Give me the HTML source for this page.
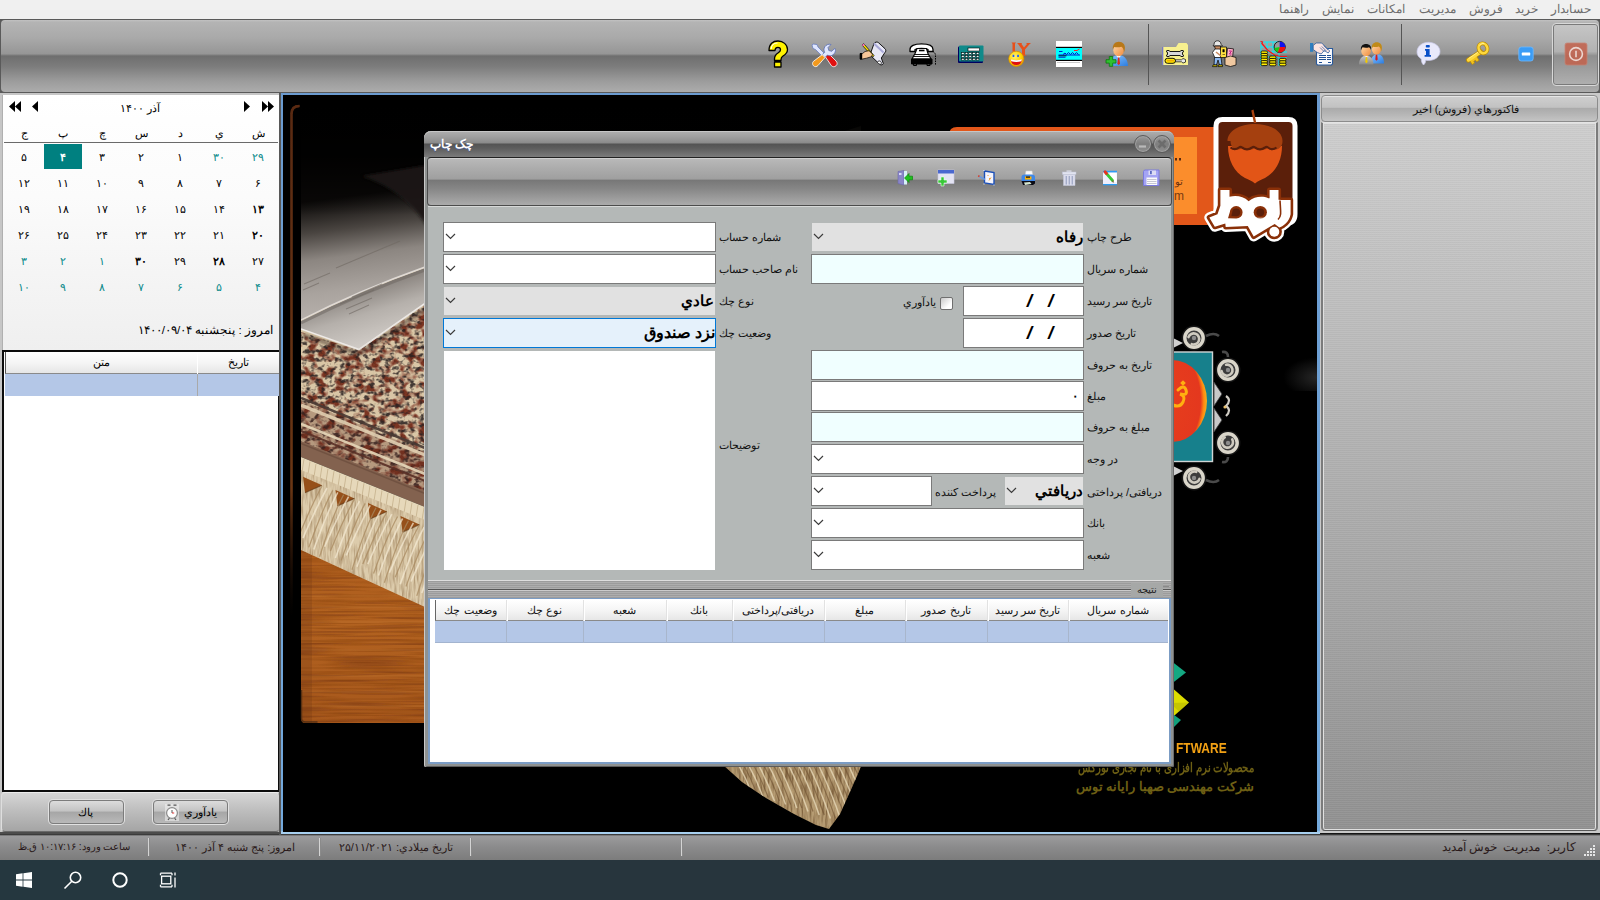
<!DOCTYPE html>
<html lang="fa"><head><meta charset="utf-8"><title>چک چاپ</title>
<style>
html,body{margin:0;padding:0}
body{width:1600px;height:900px;overflow:hidden;background:#f0f0f0;position:relative;font-family:"Liberation Sans",sans-serif;}
div{position:absolute;box-sizing:border-box}
svg{position:absolute;display:block}
.t{white-space:nowrap;direction:rtl;overflow:visible}
.tb{background:linear-gradient(#c2c2c2 0,#b4b4b4 3%,#a9a9a9 25%,#969696 47%,#6e6e6e 50%,#7d7d7d 65%,#9c9c9c 85%,#acacac 100%)}
.fld{border:1px solid #7a7a7a;background:#fff}
.az{background:#f0ffff}
.dis{background:#e1e1e1;border-color:#e1e1e1}
.hd{background:linear-gradient(#ffffff,#f4f4f4 55%,#e6e6e6)}
</style></head><body>

<div style="left:0px;top:0px;width:1600px;height:19px;background:#f0f0f0"></div>
<div class="t" style="left:1531px;top:0px;width:80px;height:18px;line-height:18px;font-size:12px;color:#6d6d6d;text-align:center;">حسابدار</div>
<div class="t" style="left:1486.75px;top:0px;width:80px;height:18px;line-height:18px;font-size:12px;color:#6d6d6d;text-align:center;">خرید</div>
<div class="t" style="left:1446px;top:0px;width:80px;height:18px;line-height:18px;font-size:12px;color:#6d6d6d;text-align:center;">فروش</div>
<div class="t" style="left:1397.75px;top:0px;width:80px;height:18px;line-height:18px;font-size:12px;color:#6d6d6d;text-align:center;">مدیریت</div>
<div class="t" style="left:1346.25px;top:0px;width:80px;height:18px;line-height:18px;font-size:12px;color:#6d6d6d;text-align:center;">امکانات</div>
<div class="t" style="left:1297.75px;top:0px;width:80px;height:18px;line-height:18px;font-size:12px;color:#6d6d6d;text-align:center;">نمایش</div>
<div class="t" style="left:1253.5px;top:0px;width:80px;height:18px;line-height:18px;font-size:12px;color:#6d6d6d;text-align:center;">راهنما</div>
<div style="left:0px;top:19px;width:1600px;height:74px;background:#5a5a5a"></div>
<div class="tb" style="left:1px;top:20px;width:1598px;height:72px;border-radius:4px"></div>
<div style="left:1148px;top:24px;width:1px;height:61px;background:#555"></div>
<div style="left:1401px;top:24px;width:1px;height:61px;background:#555"></div>
<div style="left:1552px;top:23px;width:47px;height:63px;border:1px solid #d8d8d8;border-radius:4px;box-shadow:inset 0 0 0 1px #7a7a7a;background:linear-gradient(#c6c6c6 0,#b2b2b2 45%,#9a9a9a 50%,#8f8f8f 52%,#b0b0b0 100%)"></div>
<svg style="left:0;top:19px" width="1600" height="74" viewBox="0 19 1600 74"><defs><radialGradient id="gsm" cx=".4" cy=".35" r=".7"><stop offset="0" stop-color="#fff27a"/><stop offset=".6" stop-color="#ffd400"/><stop offset="1" stop-color="#e89a00"/></radialGradient><linearGradient id="gskin" x1="0" y1="0" x2="1" y2="1"><stop offset="0" stop-color="#ffd9a8"/><stop offset="1" stop-color="#f08a3c"/></linearGradient><linearGradient id="gblue" x1="0" y1="0" x2="1" y2="1"><stop offset="0" stop-color="#8cc4ff"/><stop offset="1" stop-color="#2b7de0"/></linearGradient><linearGradient id="ggray" x1="0" y1="0" x2="0" y2="1"><stop offset="0" stop-color="#c4c4c4"/><stop offset="1" stop-color="#8a8a8a"/></linearGradient><linearGradient id="gkey" x1="0" y1="0" x2="1" y2="1"><stop offset="0" stop-color="#ffe76a"/><stop offset="1" stop-color="#d79a00"/></linearGradient></defs><g transform="translate(768,40)"><path d="M1 10.500C1 4 5 1 10 1s9.500 3.500 9.500 8.500c0 3.500-2 5-4.500 6.500-1.500 1-2 1.800-2 3.500v1H6.500v-1.500c0-3 1.300-4.600 3.500-6 1.500-1 2.500-1.700 2.500-3.300 0-1.500-1.100-2.400-2.600-2.400C8 7.300 7 8.500 7 10.500z M6.500 22h6.500v5H6.500z" fill="#fff200" stroke="#000" stroke-width="1.300" stroke-linejoin="round"/><path d="M3 9c.500-3.500 3-6 6.500-6" stroke="#fff" stroke-width="1.200" fill="none"/></g><g transform="translate(811,42)"><path d="M2 2l4 .500 1 2.500 9 9-2.500 2.500-9-9L2 6.500 1 3z" fill="#dfe6ff" stroke="#6a7fc0" stroke-width=".8"/><path d="M13.500 13.500l3-3 8.500 8.500c1.500 1.500 1.500 3.500 0 4.800-1.400 1.300-3.300 1.200-4.700-.2z" fill="#e01010" stroke="#fff" stroke-width=".8"/><path d="M24.500 8.500c-.300 2.500-1.800 4.400-4 5-1.500.400-2.800.200-4-.5L14 15.500l-2.800-2.800 2.500-2.500c-.700-1.300-.900-2.600-.5-4 .600-2.200 2.600-3.700 5-4L20 2.500l-3 3 .800 3 3 .8 3-3z" fill="#dfe6ff" stroke="#5a70b8" stroke-width=".8"/><path d="M11.200 12.700l2.800 2.800-7 8c-1.200 1.400-3.200 1.500-4.500.3-1.300-1.300-1.300-3.300 0-4.500z" fill="#f39a1e" stroke="#fff" stroke-width=".8"/></g><g transform="translate(860,41)"><path d="M14 2.500c1-1.500 3-2 4.500-.8l6.500 6c1.200 1.200 1 3-.2 4l-3.500 5.300 2 5.500c-.500 1.300-2 1.800-3.300 1L10 14z" fill="#e8e8f6" stroke="#000" stroke-width=".9"/><path d="M14 2.500l9.500 9" stroke="#a9a9d8" stroke-width="2"/><path d="M17.500 21.500c.200-1.300 1.600-1.900 2.800-1.300 1 .500 1.300 1.800.7 2.800" fill="#fff" stroke="#000" stroke-width=".8"/><path d="M2 4l1.800-1.300L14 14.500l-.500 1-1.200-.2z" fill="#ffe100" stroke="#000" stroke-width=".7"/><path d="M2 4l1.800-1.300 1 1.200-1.700 1.400z" fill="#ff6ad0"/><path d="M0 12.500h2.500l2.500-2 4-.800 3.500 3.500-1 2.500-5 1.500-4 .8H0z" fill="#f7c79a" stroke="#000" stroke-width=".7"/><rect x="0" y="12" width="2.200" height="6.500" fill="#000"/></g><g transform="translate(909,43)" stroke="#000" stroke-linejoin="round"><path d="M1 6.500C1 3 5 .800 12.500 .8S24 3 24 6.500V8.500h-5V6.500c-1.500-.800-4-1.200-6.500-1.200S7.500 5.700 6 6.500V8.500H1z" fill="#fff" stroke-width="1.300"/><path d="M8 5.500h9.500l1.500 5 3 5.500H3l3-5.500z" fill="#fff" stroke-width="1.200"/><path d="M10 7.500h5.500" stroke-width="1.600"/><path d="M5.500 11.500h14.500 M4.500 13.500h16.500" stroke-width=".9"/><path d="M2.500 16h20.500v5H2.500z" fill="#000" stroke-width="1"/><path d="M4.500 21v1.500h3V21 M18 21v1.500h3V21" fill="none" stroke-width="1"/><path d="M24 8.500c2 1 2.500 2.500 2.500 4.500v9" fill="none" stroke-width="1" stroke-dasharray="1.500 1"/></g><g transform="translate(958,45.500)"><rect x="0" y="1" width="25" height="16.500" rx="1" fill="#000060"/><rect x="1" y="0" width="24.500" height="16" rx="1" fill="#0f8a8a"/><rect x="10" y="2.500" width="11.500" height="3" fill="#fff" stroke="#000" stroke-width=".6"/><g fill="#fff" stroke="#000" stroke-width=".5"><rect x="3.5" y="7.2" width="2.600" height="1.600"/><rect x="3.5" y="10.1" width="2.600" height="1.600"/><rect x="3.5" y="13.0" width="2.600" height="1.600"/><rect x="7.2" y="7.2" width="2.600" height="1.600"/><rect x="7.2" y="10.1" width="2.600" height="1.600"/><rect x="7.2" y="13.0" width="2.600" height="1.600"/><rect x="10.9" y="7.2" width="2.600" height="1.600"/><rect x="10.9" y="10.1" width="2.600" height="1.600"/><rect x="10.9" y="13.0" width="2.600" height="1.600"/><rect x="14.600000000000001" y="7.2" width="2.600" height="1.600"/><rect x="14.600000000000001" y="10.1" width="2.600" height="1.600"/><rect x="14.600000000000001" y="13.0" width="2.600" height="1.600"/><rect x="18.3" y="7.2" width="2.600" height="1.600"/><rect x="18.3" y="10.1" width="2.600" height="1.600"/><rect x="18.3" y="13.0" width="2.600" height="1.600"/></g></g><g><path d="M1011.500 42.500h4.500l-1 1.200v8h-2.500v-8z M1017 43h5l-.500 1 2.500 3.500 3-3.500-1-1h5l-1.500 1.200-4.500 5.300v5.300l1.500 1h-6l1.500-1v-5.300l-4-5.500z" fill="#e8501a"/><circle cx="1016.300" cy="58.800" r="7.600" fill="url(#gsm)" stroke="#d98a00" stroke-width=".7"/><rect x="1012.600" y="54.800" width="1.700" height="2.200" fill="#1a5cff"/><rect x="1017.200" y="54.800" width="1.700" height="2.200" fill="#1a5cff"/><path d="M1010.500 59.500q5.800 1.800 11.600 0q-1 5.500-5.800 5.500t-5.800-5.500z" fill="#e01010"/><path d="M1010.700 59.300q5.600 1.800 11.200 0l-.5 2q-5.100 1.300-10.200 0z" fill="#fff"/></g><g><rect x="1056" y="41" width="26" height="26" fill="#fff"/><rect x="1056" y="47.500" width="26" height="13" fill="#00ffff"/><rect x="1056" y="46.800" width="26" height="1.200" fill="#000"/><rect x="1056" y="59.800" width="26" height="1.200" fill="#000"/><rect x="1057" y="62" width="23" height=".8" fill="#bcbcbc"/><path d="M1059 51.500h3.500 M1063 54.500l2-1.500 1.500 1.500 2-2 2 2 2-2 2 2 2-2 2 2 M1058.500 55h21.500 M1058.500 57.200h7" stroke="#0018d0" stroke-width="1" fill="none"/><path d="M1058.500 55.800h8" stroke="#000" stroke-width=".8"/><path d="M1074 50.500h3l2.500-1.500" stroke="#ff2020" stroke-width="1" fill="none"/></g><g><path d="M1109 66c0-5 3-9.500 6.500-10.500h6c4 1 6.500 5.500 6.500 10.500z" fill="url(#gblue)"/><path d="M1116 55.500l2.600 3 2.600-3z" fill="#fff"/><path d="M1118 57.500h1.300l.7 6-1.300 1.800-1.300-1.800z" fill="#e02818"/><ellipse cx="1118.600" cy="50.200" rx="5.300" ry="6" fill="url(#gskin)"/><path d="M1112.800 49.500c-.500-5 2.500-7.700 6-7.700 4 0 6.800 2.800 6 7.700-.200 1.500-.700 2.300-1 3 .200-3-1-5-2.500-5.800-2 .700-5.500.500-7 .3-.800.800-1.200 1.500-1.500 2.500z" fill="#b87818"/><path d="M1109.300 56.500h3.400v3.200h3.300v3.400h-3.300v3.200h-3.400v-3.200H1106v-3.400h3.300z" fill="#30c030" stroke="#0a7a0a" stroke-width=".8"/></g><g><path d="M1162 47h14l2.500-4h8l1.500 2v20h-26z" fill="#f7f08f"/><rect x="1162" y="47" width="1.300" height="18" fill="#7878c8"/><path d="M1166 51.500c1-1.500 3-1.500 4 0h10c1-1.500 3-1.500 4 0l-1.500.8v2.400l1.500.8c-1 1.500-3 1.500-4 0h-10c-1 1.500-3 1.500-4 0l1.500-.8v-2.400z" fill="#d8d8d8" stroke="#000" stroke-width=".9"/><rect x="1165" y="58.300" width="10.500" height="5" rx="2.500" fill="#ffe600" stroke="#000" stroke-width=".9"/><path d="M1175.500 59.800h6l1.500-1.300 2.500 1v2.600l-2.500 1-1.500-1.300h-6z" fill="#e8e8e8" stroke="#000" stroke-width=".7"/><path d="M1167 60.800h7" stroke="#f0a000" stroke-width="1.200"/></g><g stroke="#000" stroke-width=".7" stroke-linejoin="round"><path d="M1214 44.500c0-2.500 1.700-3.700 3.500-3.700s3.500 1.200 3.500 3.500l1.500 1.700h-9.500z" fill="#e8e8e8"/><path d="M1214.500 46h6v3.500h-5z" fill="#c88a60"/><path d="M1212.500 52.500l2.500-3.500h5l2 3.500-1 5.500h-6z" fill="#fff"/><path d="M1214.500 57.500h6.500l1 7.500h-2.500l-1.500-5-1.500 5h-2.500z" fill="#8cb8f0"/><path d="M1213 65h4v1.600h-4.500z M1218.500 65h4v1.600H1218z" fill="#ffe600"/><rect x="1220.500" y="47" width="6" height="10.500" fill="#ffe040"/><rect x="1227" y="48.500" width="6" height="10" fill="#ffb0c8" transform="rotate(6 1230 53)"/><path d="M1225 57.500l5.500-1.500 5.500 1.500v7.500l-5.500 1.500-5.500-1.500z" fill="#f0c8a0"/><path d="M1216 52l5 4" stroke="#c88a60" stroke-width="1.600" fill="none"/><path d="M1222.800 49.500h1.500v2.500h-1.500z M1222.500 54.500h2.500" fill="#000" stroke-width=".5"/><path d="M1229 51h2.500l-2 3h2" stroke="#c02080" stroke-width="1" fill="none"/></g><g><path d="M1261 42v24 M1267 42v10 M1273 42v14 M1279 52v14 M1261 42h19 M1261 47h14 M1261 52h26 M1267 57h20" stroke="#00f0ff" stroke-width="1" fill="none"/><path d="M1260.500 41.500l2 .500-.500 1.500 M1261.500 43l6 7 7 5 6 1.500 6.500 0" stroke="#ff1010" stroke-width="1.200" fill="none"/><circle cx="1279.700" cy="47" r="5.600" fill="#9a9a9a" stroke="#000" stroke-width=".8"/><path d="M1279.700 47V41.400a5.600 5.600 0 0 1 5.600 5.600z" fill="#1010f0"/><path d="M1279.700 47h5.600a5.600 5.600 0 0 1-7.600 5.200z" fill="#f01010"/><path d="M1279.700 47l-2 5.200a5.600 5.600 0 0 1-3.500-4.200z" fill="#10d010"/><rect x="1261" y="51.0" width="6.5" height="2.600" rx="1.300" fill="#ffee00" stroke="#000" stroke-width=".8"/><rect x="1261" y="53.4" width="6.5" height="2.600" rx="1.300" fill="#ffee00" stroke="#000" stroke-width=".8"/><rect x="1261" y="55.8" width="6.5" height="2.600" rx="1.300" fill="#ffee00" stroke="#000" stroke-width=".8"/><rect x="1261" y="58.2" width="6.5" height="2.600" rx="1.300" fill="#ffee00" stroke="#000" stroke-width=".8"/><rect x="1261" y="60.6" width="6.5" height="2.600" rx="1.300" fill="#ffee00" stroke="#000" stroke-width=".8"/><rect x="1261" y="63.0" width="6.5" height="2.600" rx="1.300" fill="#ffee00" stroke="#000" stroke-width=".8"/><rect x="1269.5" y="56.0" width="6.5" height="2.600" rx="1.300" fill="#ffee00" stroke="#000" stroke-width=".8"/><rect x="1269.5" y="58.4" width="6.5" height="2.600" rx="1.300" fill="#ffee00" stroke="#000" stroke-width=".8"/><rect x="1269.5" y="60.8" width="6.5" height="2.600" rx="1.300" fill="#ffee00" stroke="#000" stroke-width=".8"/><rect x="1269.5" y="63.2" width="6.5" height="2.600" rx="1.300" fill="#ffee00" stroke="#000" stroke-width=".8"/><rect x="1279.5" y="58.4" width="6.5" height="2.600" rx="1.300" fill="#ffee00" stroke="#000" stroke-width=".8"/><rect x="1279.5" y="60.8" width="6.5" height="2.600" rx="1.300" fill="#ffee00" stroke="#000" stroke-width=".8"/><rect x="1279.5" y="63.199999999999996" width="6.5" height="2.600" rx="1.300" fill="#ffee00" stroke="#000" stroke-width=".8"/></g><g><path d="M1316.500 48.500h16v15.500l-1 1h-14l-1-1z" fill="#fbfbfd" stroke="#2a5a9c" stroke-width="1.100"/><path d="M1319 55.500h6.500 M1319 57.500h6.500 M1319 59.500h6.500 M1319 62.500h3 M1327 55.500h3.500 M1327 57.500h3.500 M1327 59.500h3.500 M1328 62.500h3" stroke="#1e4f94" stroke-width="1" shape-rendering="crispEdges"/><rect x="1310" y="43" width="3.200" height="8.800" fill="#2f7fc0"/><path d="M1313.200 45.500l3-2.500h5.500l8 8-1.500 2-4-2.500-3 3.500-4-1.500-4-3z" fill="#fde4e0" stroke="#2a5a9c" stroke-width=".8"/><path d="M1320 47.500l4.500 4.500 M1321.800 46.500l4.500 4.500 M1323.600 45.500l4.500 4.500" stroke="#2a5a9c" stroke-width=".7"/></g><g><path d="M1370.500 63.500c0-4.500 2-8 5-9h4c3 1 4.500 4.500 4.500 9z" fill="url(#gblue)"/><path d="M1375.800 54.500h1.400l.500 5-1.200 1.300-1.200-1.300z" fill="#d81818"/><ellipse cx="1376.500" cy="49.300" rx="4.600" ry="5.300" fill="url(#gskin)"/><path d="M1371.800 48.500c-.500-4.200 2-6.300 4.800-6.300 3.500 0 6 2.500 5.200 6.800-.200 1.200-.600 2-.9 2.500 0-2.500-.800-4.300-2.200-5-1.800.700-4.300.500-5.500.3-.700.500-1.100 1-1.400 1.700z" fill="#c08a18"/><path d="M1359 64.500c0-4.500 2.200-8 5.200-8.500h4c3 .500 5.200 4 5.200 8.500z" fill="url(#ggray)"/><path d="M1365 56h2.800l-1.400 2z" fill="#fff"/><path d="M1365.800 57h1.300l.500 5-1.200 1.300-1.200-1.300z" fill="#f0c800"/><ellipse cx="1366" cy="51" rx="4.800" ry="5.300" fill="url(#gskin)"/><path d="M1361 50.500c-.800-4.500 2-6.500 5-6.500 3.200 0 5.800 2 5 6-.500-1.500-1-2.300-2-2.800-2 .800-5 .500-6.500 0-.800 1-1.200 2-1.500 3.300z" fill="#111"/></g><g><path d="M1417 52c0-5.500 5-9.700 11.500-9.700s11.500 4.200 11.500 9.200-5 9-11.500 9c-1 0-1.800-.100-2.700-.3-.200 2-.900 3.700-2.300 4.800-1.600-1.600-2.200-3.700-2.200-6-2.700-1.700-4.300-4.100-4.300-7z" fill="#e9e9fb" stroke="#c8c8e8" stroke-width=".7"/><rect x="1425.800" y="45" width="4" height="2.600" rx=".8" fill="#0a50c8"/><path d="M1425 49h4.600v6h1.400v1.800h-6.400V55h1.400v-4.200H1425z" fill="#0a50c8"/></g><g><path d="M1480.500 52L1468.500 60" stroke="#b88a08" stroke-width="5" stroke-linecap="round"/><path d="M1469 59.500l3.200 5 2.400-1.500-.8-1.700 1.700-1.100 1.200 1.600 2.400-1.600-3-4.700z" fill="#f2c21c" stroke="#b88a08" stroke-width=".7"/><path d="M1480.500 52L1468.500 60" stroke="#ffd93c" stroke-width="3.400" stroke-linecap="round"/><path d="M1479 51.600L1469 58.300" stroke="#fff2a0" stroke-width="1" stroke-linecap="round" opacity=".8"/><ellipse cx="1483" cy="48.300" rx="4.300" ry="5" fill="none" stroke="#b88a08" stroke-width="4" transform="rotate(-25 1483 48.300)"/><ellipse cx="1483" cy="48.300" rx="4.300" ry="5" fill="none" stroke="#ffd93c" stroke-width="2.600" transform="rotate(-25 1483 48.300)"/><path d="M1479.800 45.500a4.300 5 -25 0 1 4.500-2" fill="none" stroke="#fff2a0" stroke-width="1" opacity=".9"/></g><g><rect x="1518.800" y="47" width="14.400" height="14" rx="2.500" fill="#3a9cf6" stroke="#6fbaff" stroke-width=".8"/><rect x="1521.800" y="52.600" width="8.400" height="3" rx=".6" fill="#fff"/></g><g><rect x="1565" y="43" width="22" height="22" rx="2" fill="#c2634e" stroke="#c98070" stroke-width=".8" opacity=".88"/><circle cx="1576" cy="54" r="6.400" fill="none" stroke="#ecd6d0" stroke-width="1.600"/><path d="M1576 50.800v6.400" stroke="#ecd6d0" stroke-width="1.600"/></g></svg>
<div style="left:0px;top:93px;width:282px;height:739px;background:#c6c6c6"></div>
<div style="left:2px;top:95px;width:278px;height:255px;background:linear-gradient(#ffffff,#fbfbfb 40%,#efefef 100%);border-left:1px solid #b0b0b0"></div>
<div class="t" style="left:60px;top:97px;width:160px;height:22px;line-height:22px;font-size:11px;color:#000;text-align:center;">آذر ۱۴۰۰</div>
<svg style="left:6px;top:99px" width="270" height="16" viewBox="0 0 270 16"><path d="M9 2v11L3 7.5z M15 2v11L9 7.5z" fill="#000"/><path d="M32 2v11L26 7.5z" fill="#000"/><path d="M238 2v11l6-5.5z" fill="#000"/><path d="M256 2v11l6-5.5z M262 2v11l6-5.5z" fill="#000"/></svg>
<div class="t" style="left:239px;top:124px;width:38px;height:18px;line-height:18px;font-size:11px;color:#000;text-align:center;">ش</div>
<div class="t" style="left:200px;top:124px;width:38px;height:18px;line-height:18px;font-size:11px;color:#000;text-align:center;">ي</div>
<div class="t" style="left:161px;top:124px;width:38px;height:18px;line-height:18px;font-size:11px;color:#000;text-align:center;">د</div>
<div class="t" style="left:122px;top:124px;width:38px;height:18px;line-height:18px;font-size:11px;color:#000;text-align:center;">س</div>
<div class="t" style="left:83px;top:124px;width:38px;height:18px;line-height:18px;font-size:11px;color:#000;text-align:center;">چ</div>
<div class="t" style="left:44px;top:124px;width:38px;height:18px;line-height:18px;font-size:11px;color:#000;text-align:center;">پ</div>
<div class="t" style="left:5px;top:124px;width:38px;height:18px;line-height:18px;font-size:11px;color:#000;text-align:center;">ج</div>
<div style="left:4px;top:142px;width:274px;height:1px;background:#6a6a6a"></div>
<div class="t" style="left:239px;top:147px;width:38px;height:20px;line-height:20px;font-size:11px;color:#0a8a8a;text-align:center;">۲۹</div>
<div class="t" style="left:200px;top:147px;width:38px;height:20px;line-height:20px;font-size:11px;color:#0a8a8a;text-align:center;">۳۰</div>
<div class="t" style="left:161px;top:147px;width:38px;height:20px;line-height:20px;font-size:11px;color:#000;text-align:center;">۱</div>
<div class="t" style="left:122px;top:147px;width:38px;height:20px;line-height:20px;font-size:11px;color:#000;text-align:center;">۲</div>
<div class="t" style="left:83px;top:147px;width:38px;height:20px;line-height:20px;font-size:11px;color:#000;text-align:center;">۳</div>
<div style="left:44px;top:144px;width:38px;height:25px;background:#008080"></div>
<div class="t" style="left:44px;top:147px;width:38px;height:20px;line-height:20px;font-size:11px;color:#fff;text-align:center;font-weight:bold;">۴</div>
<div class="t" style="left:5px;top:147px;width:38px;height:20px;line-height:20px;font-size:11px;color:#000;text-align:center;">۵</div>
<div class="t" style="left:239px;top:173px;width:38px;height:20px;line-height:20px;font-size:11px;color:#000;text-align:center;">۶</div>
<div class="t" style="left:200px;top:173px;width:38px;height:20px;line-height:20px;font-size:11px;color:#000;text-align:center;">۷</div>
<div class="t" style="left:161px;top:173px;width:38px;height:20px;line-height:20px;font-size:11px;color:#000;text-align:center;">۸</div>
<div class="t" style="left:122px;top:173px;width:38px;height:20px;line-height:20px;font-size:11px;color:#000;text-align:center;">۹</div>
<div class="t" style="left:83px;top:173px;width:38px;height:20px;line-height:20px;font-size:11px;color:#000;text-align:center;">۱۰</div>
<div class="t" style="left:44px;top:173px;width:38px;height:20px;line-height:20px;font-size:11px;color:#000;text-align:center;">۱۱</div>
<div class="t" style="left:5px;top:173px;width:38px;height:20px;line-height:20px;font-size:11px;color:#000;text-align:center;">۱۲</div>
<div class="t" style="left:239px;top:199px;width:38px;height:20px;line-height:20px;font-size:11px;color:#000;text-align:center;font-weight:bold;">۱۳</div>
<div class="t" style="left:200px;top:199px;width:38px;height:20px;line-height:20px;font-size:11px;color:#000;text-align:center;">۱۴</div>
<div class="t" style="left:161px;top:199px;width:38px;height:20px;line-height:20px;font-size:11px;color:#000;text-align:center;">۱۵</div>
<div class="t" style="left:122px;top:199px;width:38px;height:20px;line-height:20px;font-size:11px;color:#000;text-align:center;">۱۶</div>
<div class="t" style="left:83px;top:199px;width:38px;height:20px;line-height:20px;font-size:11px;color:#000;text-align:center;">۱۷</div>
<div class="t" style="left:44px;top:199px;width:38px;height:20px;line-height:20px;font-size:11px;color:#000;text-align:center;">۱۸</div>
<div class="t" style="left:5px;top:199px;width:38px;height:20px;line-height:20px;font-size:11px;color:#000;text-align:center;">۱۹</div>
<div class="t" style="left:239px;top:225px;width:38px;height:20px;line-height:20px;font-size:11px;color:#000;text-align:center;font-weight:bold;">۲۰</div>
<div class="t" style="left:200px;top:225px;width:38px;height:20px;line-height:20px;font-size:11px;color:#000;text-align:center;">۲۱</div>
<div class="t" style="left:161px;top:225px;width:38px;height:20px;line-height:20px;font-size:11px;color:#000;text-align:center;">۲۲</div>
<div class="t" style="left:122px;top:225px;width:38px;height:20px;line-height:20px;font-size:11px;color:#000;text-align:center;">۲۳</div>
<div class="t" style="left:83px;top:225px;width:38px;height:20px;line-height:20px;font-size:11px;color:#000;text-align:center;">۲۴</div>
<div class="t" style="left:44px;top:225px;width:38px;height:20px;line-height:20px;font-size:11px;color:#000;text-align:center;">۲۵</div>
<div class="t" style="left:5px;top:225px;width:38px;height:20px;line-height:20px;font-size:11px;color:#000;text-align:center;">۲۶</div>
<div class="t" style="left:239px;top:251px;width:38px;height:20px;line-height:20px;font-size:11px;color:#000;text-align:center;">۲۷</div>
<div class="t" style="left:200px;top:251px;width:38px;height:20px;line-height:20px;font-size:11px;color:#000;text-align:center;font-weight:bold;">۲۸</div>
<div class="t" style="left:161px;top:251px;width:38px;height:20px;line-height:20px;font-size:11px;color:#000;text-align:center;">۲۹</div>
<div class="t" style="left:122px;top:251px;width:38px;height:20px;line-height:20px;font-size:11px;color:#000;text-align:center;font-weight:bold;">۳۰</div>
<div class="t" style="left:83px;top:251px;width:38px;height:20px;line-height:20px;font-size:11px;color:#0a8a8a;text-align:center;">۱</div>
<div class="t" style="left:44px;top:251px;width:38px;height:20px;line-height:20px;font-size:11px;color:#0a8a8a;text-align:center;">۲</div>
<div class="t" style="left:5px;top:251px;width:38px;height:20px;line-height:20px;font-size:11px;color:#0a8a8a;text-align:center;">۳</div>
<div class="t" style="left:239px;top:277px;width:38px;height:20px;line-height:20px;font-size:11px;color:#0a8a8a;text-align:center;">۴</div>
<div class="t" style="left:200px;top:277px;width:38px;height:20px;line-height:20px;font-size:11px;color:#0a8a8a;text-align:center;">۵</div>
<div class="t" style="left:161px;top:277px;width:38px;height:20px;line-height:20px;font-size:11px;color:#0a8a8a;text-align:center;">۶</div>
<div class="t" style="left:122px;top:277px;width:38px;height:20px;line-height:20px;font-size:11px;color:#0a8a8a;text-align:center;">۷</div>
<div class="t" style="left:83px;top:277px;width:38px;height:20px;line-height:20px;font-size:11px;color:#0a8a8a;text-align:center;">۸</div>
<div class="t" style="left:44px;top:277px;width:38px;height:20px;line-height:20px;font-size:11px;color:#0a8a8a;text-align:center;">۹</div>
<div class="t" style="left:5px;top:277px;width:38px;height:20px;line-height:20px;font-size:11px;color:#0a8a8a;text-align:center;">۱۰</div>
<div class="t" style="left:100px;top:320px;width:173px;height:20px;line-height:20px;font-size:11.6px;color:#000;text-align:right;">امروز : پنجشنبه ۱۴۰۰/۰۹/۰۴</div>
<div style="left:2px;top:350px;width:278px;height:442px;background:#fff;border:2px solid #0c0c0c"></div>
<div class="hd" style="left:5px;top:352px;width:274px;height:22px;border-bottom:1px solid #8a8a8a;border-left:1px solid #555"></div>
<div style="left:197px;top:352px;width:1px;height:22px;background:#fff"></div>
<div class="t" style="left:198px;top:352px;width:80px;height:21px;line-height:21px;font-size:11px;color:#000;text-align:center;">تاریخ</div>
<div class="t" style="left:5px;top:352px;width:192px;height:21px;line-height:21px;font-size:11px;color:#000;text-align:center;">متن</div>
<div style="left:5px;top:374px;width:274px;height:22px;background:#b4c7e7"></div>
<div style="left:197px;top:374px;width:1px;height:22px;background:#a9a9a9"></div>
<div style="left:1px;top:792px;width:279px;height:40px;background:linear-gradient(#d6d6d6,#bebebe 45%,#a5a5a5 100%);border-radius:4px;border:1px solid #9a9a9a;border-top-color:#ececec;border-left-color:#dedede;border-bottom-color:#6a6a6a"></div>
<div style="left:49px;top:800px;width:75px;height:24px;border:1px solid #7c7c7c;border-radius:4px;box-shadow:0 0 0 1px #e2e2e2;background:linear-gradient(#dcdcdc 0,#c3c3c3 46%,#a6a6a6 50%,#b9b9b9 100%)"></div>
<div style="left:153px;top:800px;width:75px;height:24px;border:1px solid #7c7c7c;border-radius:4px;box-shadow:0 0 0 1px #e2e2e2;background:linear-gradient(#dcdcdc 0,#c3c3c3 46%,#a6a6a6 50%,#b9b9b9 100%)"></div>
<div class="t" style="left:48px;top:800px;width:75px;height:24px;line-height:24px;font-size:11px;color:#000;text-align:center;">پاك</div>
<div class="t" style="left:178px;top:800px;width:44px;height:24px;line-height:24px;font-size:11px;color:#000;text-align:center;">يادآوري</div>
<svg style="left:165px;top:804px" width="14" height="17" viewBox="0 0 14 17"><rect x="0" y="0" width="14" height="17" fill="#f2f2f2" opacity=".55"/><path d="M2.500 1.200h3 M8.500 1.200h3 M3 16l1.500-2 M11 16l-1.500-2" stroke="#555" stroke-width="1.200"/><circle cx="7" cy="9" r="5.400" fill="#fdfdfd" stroke="#8a8a8a" stroke-width="1.200"/><path d="M7 9V6" stroke="#444" stroke-width=".9"/><path d="M7 9h2.200" stroke="#e02020" stroke-width=".9"/></svg>
<div style="left:279px;top:93px;width:2px;height:742px;background:#585858"></div>
<div style="left:281px;top:93px;width:1039px;height:741px;background:linear-gradient(#6b9bd0 0,#74a9dc 99.500%,#a8d0f0 99.750%)"></div>
<div style="left:283px;top:95px;width:1034px;height:737px;background:#000;overflow:hidden"><svg style="left:0;top:0" width="1034" height="737" viewBox="283 95 1034 737"><defs>
<linearGradient id="brl" x1="0" y1="0" x2="0" y2="1"><stop offset="0" stop-color="#5a2a12"/><stop offset=".75" stop-color="#6a3614"/><stop offset="1" stop-color="#2a1206" stop-opacity="0"/></linearGradient>
<linearGradient id="brt" x1="0" y1="0" x2="1" y2="0"><stop offset="0" stop-color="#5a2a12"/><stop offset=".55" stop-color="#3a1a0a"/><stop offset="1" stop-color="#140804" stop-opacity="0"/></linearGradient>
<linearGradient id="fadeTop" x1="0" y1="0" x2="0" y2="1"><stop offset="0" stop-color="#000"/><stop offset=".45" stop-color="#000" stop-opacity=".92"/><stop offset="1" stop-color="#000" stop-opacity="0"/></linearGradient>
<linearGradient id="paper" gradientUnits="userSpaceOnUse" x1="350" y1="196" x2="366" y2="318"><stop offset="0" stop-color="#0b0908"/><stop offset=".26" stop-color="#4a4541"/><stop offset=".48" stop-color="#8c8681"/><stop offset=".75" stop-color="#a9a39e"/><stop offset="1" stop-color="#b9b3ae"/></linearGradient>
<linearGradient id="paper2" gradientUnits="userSpaceOnUse" x1="352" y1="292" x2="368" y2="345"><stop offset="0" stop-color="#8a847f"/><stop offset=".45" stop-color="#b5b0ab"/><stop offset="1" stop-color="#d0cbc6"/></linearGradient>
<linearGradient id="wood" x1="0" y1="0" x2="0" y2="1"><stop offset="0" stop-color="#ab5b1c"/><stop offset=".5" stop-color="#b26220"/><stop offset="1" stop-color="#a7581c"/></linearGradient>
<filter id="carp" x="0" y="0" width="100%" height="100%"><feTurbulence type="fractalNoise" baseFrequency=".11 .13" numOctaves="2" seed="7" result="n"/>
<feColorMatrix in="n" type="matrix" values="0 0 0 0 0  0 0 0 0 0  0 0 0 0 0  4.5 0 0 0 -2.0"/><feComposite in="SourceGraphic" operator="in"/></filter>
<filter id="carp2" x="0" y="0" width="100%" height="100%"><feTurbulence type="fractalNoise" baseFrequency=".2 .24" numOctaves="2" seed="3" result="n"/>
<feColorMatrix in="n" type="matrix" values="0 0 0 0 0  0 0 0 0 0  0 0 0 0 0  0 4 0 0 -1.9"/><feComposite in="SourceGraphic" operator="in"/></filter>
<filter id="grain" x="0" y="0" width="100%" height="100%"><feTurbulence type="fractalNoise" baseFrequency=".012 .35" numOctaves="2" seed="11" result="n"/>
<feColorMatrix in="n" type="matrix" values="0 0 0 0 0  0 0 0 0 0  0 0 0 0 0  2.4 0 0 0 -.95"/><feComposite in="SourceGraphic" operator="in"/></filter>
<filter id="fr" x="-5%" y="-5%" width="110%" height="110%"><feTurbulence type="fractalNoise" baseFrequency=".5 .06" numOctaves="2" seed="5" result="n"/>
<feColorMatrix in="n" type="matrix" values="0 0 0 0 0  0 0 0 0 0  0 0 0 0 0  2.6 0 0 0 -1.05"/><feComposite in="SourceGraphic" operator="in"/></filter>
<filter id="blur1"><feGaussianBlur stdDeviation=".7"/></filter>
<filter id="blur2"><feGaussianBlur stdDeviation="1.6"/></filter>
<clipPath id="ph"><path d="M301 105h560v618H305q-4 0-4-5z"/></clipPath>
<clipPath id="carpclip"><path d="M301 332l57 18 67-47L865 163V670L425 492L301 442z"/></clipPath>
</defs><path d="M291.500 616V114q0-8 8-8" fill="none" stroke="url(#brl)" stroke-width="2.600"/><path d="M298 106h560" fill="none" stroke="url(#brt)" stroke-width="1.800"/><path d="M291.500 114q0-8 8-8" fill="none" stroke="#5a2a12" stroke-width="2"/><g clip-path="url(#ph)"><rect x="301" y="105" width="560" height="618" fill="#0a0908"/><rect x="301" y="520" width="560" height="203" fill="url(#wood)"/><rect x="301" y="520" width="560" height="203" fill="#74340e" filter="url(#grain)" opacity=".6"/><g stroke="#8a4610" stroke-width="1" opacity=".45"><path d="M301 601h560"/><path d="M301 612h560"/><path d="M301 628h560"/><path d="M301 641h560"/><path d="M301 659h560"/><path d="M301 668h560"/><path d="M301 684h560"/><path d="M301 699h560"/><path d="M301 713h560"/></g><g stroke="#cf8a44" stroke-width="1.200" opacity=".28"><path d="M301 596h560"/><path d="M301 607h560"/><path d="M301 622h560"/><path d="M301 650h560"/><path d="M301 676h560"/><path d="M301 692h560"/><path d="M301 706h560"/></g><rect x="301" y="545" width="11" height="178" fill="#6a3410" opacity=".22"/><path d="M301 300L880 120V680L425 495L301 445z" fill="#d9c6a6"/><g clip-path="url(#carpclip)"><rect x="301" y="150" width="560" height="460" fill="#7a3424" filter="url(#carp)"/><rect x="301" y="150" width="560" height="460" fill="#2c2222" filter="url(#carp2)" opacity=".85"/></g><path d="M301 400L425 452L865 632V669L425 491L301 441z" fill="#5a2418" opacity=".28"/><g fill="none" opacity=".9"><path d="M301 398L425 448l440 180" stroke="#4a3a34" stroke-width="2.500"/><path d="M301 405L425 455l440 180" stroke="#e2d0b2" stroke-width="3.500"/><path d="M301 424L425 474l440 180" stroke="#e6d6b8" stroke-width="2.500"/><path d="M301 431L425 481l440 180" stroke="#5a3026" stroke-width="2"/></g><path d="M301 441L425 491L865 669V685L425 507L301 457z" fill="#83624f"/><path d="M301 443.500L425 493.500L865 671.500" fill="none" stroke="#6a4c3c" stroke-width="1.500" opacity=".7"/><path d="M301 457L425 507L865 685V700L425 522L301 472z" fill="#e6d8ba"/><g stroke="#b9a37c" stroke-width="1" opacity=".6"><path d="M304 459.0l-2 13"/><path d="M310 461.4l-2 13"/><path d="M316 463.8l-2 13"/><path d="M322 466.3l-2 13"/><path d="M328 468.7l-2 13"/><path d="M334 471.1l-2 13"/><path d="M340 473.5l-2 13"/><path d="M346 475.9l-2 13"/><path d="M352 478.3l-2 13"/><path d="M358 480.8l-2 13"/><path d="M364 483.2l-2 13"/><path d="M370 485.6l-2 13"/><path d="M376 488.0l-2 13"/><path d="M382 490.4l-2 13"/><path d="M388 492.9l-2 13"/><path d="M394 495.3l-2 13"/><path d="M400 497.7l-2 13"/><path d="M406 500.1l-2 13"/><path d="M412 502.5l-2 13"/><path d="M418 504.9l-2 13"/><path d="M424 507.4l-2 13"/></g><path d="M301 470L425 520L865 698V760L425 607L301 550z" fill="#dccbab"/><path d="M301 470L425 520L865 698V760L425 607L301 550z" fill="#8a6a44" filter="url(#fr)" opacity=".5"/><path d="M303.0 476.8l19 8.500l-17 7.500z" fill="#96501a"/><path d="M322.0 485.3l-17 7.500" stroke="#5a3414" stroke-width="1.200" opacity=".6"/><path d="M335.5 489.9l19 8.500l-17 7.500z" fill="#96501a"/><path d="M354.5 498.4l-17 7.500" stroke="#5a3414" stroke-width="1.200" opacity=".6"/><path d="M368.0 503.0l19 8.500l-17 7.500z" fill="#96501a"/><path d="M387.0 511.5l-17 7.500" stroke="#5a3414" stroke-width="1.200" opacity=".6"/><path d="M400.5 516.1l19 8.500l-17 7.500z" fill="#96501a"/><path d="M419.5 524.6l-17 7.500" stroke="#5a3414" stroke-width="1.200" opacity=".6"/><g stroke="#a98a60" stroke-width="1.300" opacity=".75" fill="none"><path d="M322.0 486.0q-10 18 -24 52"/><path d="M332.8 490.4q-10 18 -24 57"/><path d="M343.6 494.7q-10 18 -24 62"/><path d="M354.4 499.1q-10 18 -24 52"/><path d="M365.2 503.4q-10 18 -24 57"/><path d="M376.0 507.8q-10 18 -24 62"/><path d="M386.8 512.1q-10 18 -24 52"/><path d="M397.6 516.5q-10 18 -24 57"/><path d="M408.4 520.8q-10 18 -24 62"/><path d="M419.2 525.2q-10 18 -24 52"/><path d="M430.0 529.5q-10 18 -24 57"/><path d="M440.8 533.9q-10 18 -24 62"/></g><g stroke="#f6ecd6" stroke-width="1.600" opacity=".7" fill="none"><path d="M327.0 488.0q-10 18 -24 50"/><path d="M337.8 492.4q-10 18 -24 57"/><path d="M348.6 496.7q-10 18 -24 50"/><path d="M359.4 501.1q-10 18 -24 57"/><path d="M370.2 505.4q-10 18 -24 50"/><path d="M381.0 509.8q-10 18 -24 57"/><path d="M391.8 514.1q-10 18 -24 50"/><path d="M402.6 518.5q-10 18 -24 57"/><path d="M413.4 522.8q-10 18 -24 50"/><path d="M424.2 527.2q-10 18 -24 57"/><path d="M435.0 531.5q-10 18 -24 50"/><path d="M445.8 535.9q-10 18 -24 57"/></g><path d="M301 150L470 120L425 267Q360 290 301 320z" fill="url(#paper)"/><path d="M301 321Q360 291 425 268V304L359 350L301 329z" fill="url(#paper2)"/><path d="M301 323Q360 293 425 270" stroke="#6f6964" stroke-width="3" fill="none" opacity=".55" filter="url(#blur1)"/><path d="M301 320Q360 290 425 267" stroke="#e2deda" stroke-width="1.400" fill="none" opacity=".9"/><path d="M301 329l58 20.500 66-46" stroke="#f0ece8" stroke-width="1.600" fill="none"/><path d="M303 335l56 19 66-45" stroke="#2a1c16" stroke-width="3.500" fill="none" opacity=".5" filter="url(#blur2)"/><g stroke="#6f6862" stroke-width="1.100" opacity=".6" filter="url(#blur1)"><path d="M304 284l26-11 M303 290l16-7 M336 268l64-27 M340 304l34-14 M346 309l26-11 M349 314l20-9 M352 297l30-13"/></g><rect x="301" y="105" width="560" height="110" fill="url(#fadeTop)"/><path d="M362 176Q405 190 428 228V165z" fill="#1c1613" opacity=".95" filter="url(#blur2)"/></g><path d="M301.500 690v28q0 4 4 4h12" fill="none" stroke="#4a2a12" stroke-width="1.500" opacity=".8"/><clipPath id="fpc"><path d="M722 764h140l-5 12-8 18-9 20-11 15-13-4-22-11-28-16-24-16z"/></clipPath><path d="M722 764h140l-5 12-8 18-9 20-11 15-13-4-22-11-28-16-24-16z" fill="#b59b72"/><path d="M722 764h140l-5 12-8 18-9 20-11 15-13-4-22-11-28-16-24-16z" fill="#5e4020" filter="url(#fr)" opacity=".6"/><g clip-path="url(#fpc)"><g stroke="#eadcbc" stroke-width="1.500" opacity=".75" fill="none"><path d="M738 764q8.0 14.0 14.0 30.0"/><path d="M748 764q8.6 15.5 15.2 33.5"/><path d="M758 764q9.2 17.0 16.4 37.0"/><path d="M768 764q9.8 18.5 17.6 40.5"/><path d="M778 764q10.4 20.0 18.8 44.0"/><path d="M788 764q11.0 21.5 20.0 47.5"/><path d="M798 764q11.6 23.0 21.2 51.0"/><path d="M808 764q12.2 24.5 22.4 54.5"/><path d="M818 764q12.8 26.0 23.6 58.0"/><path d="M828 764q13.4 27.5 24.8 61.5"/><path d="M838 764q14.0 29.0 26.0 65.0"/><path d="M848 764q14.6 30.5 27.2 68.5"/></g><g stroke="#6e5030" stroke-width="1.200" opacity=".6" fill="none"><path d="M743 764q8.0 14.0 14.0 30.0"/><path d="M753 764q8.6 15.5 15.2 33.5"/><path d="M763 764q9.2 17.0 16.4 37.0"/><path d="M773 764q9.8 18.5 17.6 40.5"/><path d="M783 764q10.4 20.0 18.8 44.0"/><path d="M793 764q11.0 21.5 20.0 47.5"/><path d="M803 764q11.6 23.0 21.2 51.0"/><path d="M813 764q12.2 24.5 22.4 54.5"/><path d="M823 764q12.8 26.0 23.6 58.0"/><path d="M833 764q13.4 27.5 24.8 61.5"/><path d="M843 764q14.0 29.0 26.0 65.0"/><path d="M853 764q14.6 30.5 27.2 68.5"/></g></g><path d="M957 127h258v98H949v-90q0-8 8-8z" fill="#e2571a"/><rect x="960" y="137" width="237" height="77" fill="#fb8d2c"/><g fill="#5a2a10"><rect x="1179" y="158" width="2" height="2.500"/><rect x="1175" y="158" width="2" height="2.500"/></g></svg><div class="t" style="left:892px;top:80px;width:20px;height:14px;line-height:14px;font-size:10px;color:#6a3010;direction:rtl;text-align:left">تو</div><div class="t" style="left:891px;top:94px;width:20px;height:14px;line-height:14px;font-size:12px;color:#7a3a10;direction:ltr;text-align:left">m</div><svg style="left:917px;top:10px" width="104" height="145" viewBox="1200 105 104 145"><path d="M1222.500 117h66q9 0 9 9v88q0 12-12 12h-72v-100q0-9 9-9z" fill="#fff"/><path d="M1220.400 190.100H1229.500V196.700C1236.500 195.200 1243.500 196.300 1248.600 201.200C1254.400 196.700 1262.200 195.600 1268.400 198.300L1269.600 198.300V190.100H1278.500V199.800L1281.600 200.100H1290.600V214.200C1289.400 222 1282.400 226.700 1279.300 227.400L1274.700 223.900L1253.700 236.400L1247.800 225.900L1225.700 227L1225.300 223.500L1214.800 226.700L1209.300 217.500L1217.500 214.200L1220.400 205.700Z" fill="#fff" stroke="#fff" stroke-width="10" stroke-linejoin="round"/><circle cx="1274.300" cy="231.700" r="5" fill="#fff" stroke="#fff" stroke-width="10"/><path d="M1222.500 122h66q4 0 4 4v76h-74v-76q0-4 4-4z" fill="#5b1f0a"/><path d="M1251.300 110.500l2.200-1 2.800 13.500h-2.400z" fill="#a8410f"/><path d="M1228 146c0 14 6 26 17 32 4 2 7 3 10 5.500 3-2.500 6-3.500 10-5.500 11-6 17-18 17-32z" fill="#e25517"/><path d="M1227.500 141c0-10 12-17 27.500-17s27.500 7 27.500 17c0 3-1 5.500-3 7-2.500 2-6 2-8.500 0-1-.800-2-.8-3 0-3 2.200-7 2.200-10 0-1-.800-2-.8-3 0-3 2.200-7 2.200-10 0-1-.800-2-.8-3 0-2.500 2-6 2-8.500 0-2-1.500-3-4-3-7z" fill="#a5400f"/><path d="M1230.500 147.500c2.500 2 6 2 8.500 0 1-.800 2-.8 3 0 3 2.200 7 2.200 10 0 1-.800 2-.8 3 0 3 2.200 7 2.200 10 0 1-.800 2-.8 3 0 2.500 2 6 2 8.500 0" fill="none" stroke="#5b1f0a" stroke-width="2.200"/><path d="M1220.400 190.100H1229.500V196.700C1236.500 195.200 1243.500 196.300 1248.600 201.200C1254.400 196.700 1262.200 195.600 1268.400 198.300L1269.600 198.300V190.100H1278.500V199.800L1281.600 200.100H1290.600V214.200C1289.400 222 1282.400 226.700 1279.300 227.400L1274.700 223.900L1253.700 236.400L1247.800 225.900L1225.700 227L1225.300 223.500L1214.800 226.700L1209.300 217.500L1217.500 214.200L1220.400 205.700Z" fill="#8a3008" stroke="#8a3008" stroke-width="5.200" stroke-linejoin="round"/><circle cx="1274.300" cy="231.700" r="5" fill="#8a3008" stroke="#8a3008" stroke-width="5.200"/><path d="M1220.400 190.100H1229.500V196.700C1236.500 195.200 1243.500 196.300 1248.600 201.200C1254.400 196.700 1262.200 195.600 1268.400 198.300L1269.600 198.300V190.100H1278.500V199.800L1281.600 200.100H1290.600V214.200C1289.400 222 1282.400 226.700 1279.300 227.400L1274.700 223.900L1253.700 236.400L1247.800 225.900L1225.700 227L1225.300 223.500L1214.800 226.700L1209.300 217.500L1217.500 214.200L1220.400 205.700Z" fill="#fff"/><circle cx="1274.300" cy="231.700" r="5" fill="#fff"/><path d="M1280 200.500c.300 6 .8 10 .6 13.500-.200 2.500-1.500 4.500-2.600 5.500" fill="none" stroke="#8a3008" stroke-width="1.600"/><path d="M1229.800 212.300a6.400 6.200 0 1 1 6.400 6.200l-8.200-.2z" fill="#8a3008"/><path d="M1232.200 212.300a4 3.900 0 1 1 4 3.900l-4.800-.2z" fill="#5b1f0a"/><ellipse cx="1260.300" cy="212.300" rx="6.600" ry="6.400" fill="#8a3008"/><ellipse cx="1260.300" cy="212.300" rx="3.900" ry="3.900" fill="#5b1f0a"/><path d="M1255.500 218.200h9.600" stroke="#fff" stroke-width="1" opacity=".7"/></svg><svg style="left:887px;top:225px" width="80" height="180" viewBox="1170 320 80 180"><defs><radialGradient id="med" cx=".1" cy=".5" r=".9"><stop offset="0" stop-color="#e8421c"/><stop offset=".9" stop-color="#e4381e"/><stop offset=".95" stop-color="#ff8a10"/><stop offset="1" stop-color="#f0b020"/></radialGradient></defs><circle cx="1194" cy="338" r="12.5" fill="#161616"/><circle cx="1194" cy="338" r="9.2" fill="#3c3c3c" stroke="#dad6ca" stroke-width="3.400"/><path d="M1188.5 339a5.500 5.500 0 1 1 5.500 5.500" fill="none" stroke="#cfcbc0" stroke-width="2.600" stroke-linecap="round" transform="rotate(20 1194 338)"/><circle cx="1194" cy="338" r="2.200" fill="#8c8c8c"/><circle cx="1228" cy="370" r="12.5" fill="#161616"/><circle cx="1228" cy="370" r="9.2" fill="#3c3c3c" stroke="#dad6ca" stroke-width="3.400"/><path d="M1222.5 371a5.500 5.500 0 1 1 5.500 5.500" fill="none" stroke="#cfcbc0" stroke-width="2.600" stroke-linecap="round" transform="rotate(80 1228 370)"/><circle cx="1228" cy="370" r="2.200" fill="#8c8c8c"/><circle cx="1228" cy="443" r="12.5" fill="#161616"/><circle cx="1228" cy="443" r="9.2" fill="#3c3c3c" stroke="#dad6ca" stroke-width="3.400"/><path d="M1222.5 444a5.500 5.500 0 1 1 5.500 5.500" fill="none" stroke="#cfcbc0" stroke-width="2.600" stroke-linecap="round" transform="rotate(150 1228 443)"/><circle cx="1228" cy="443" r="2.200" fill="#8c8c8c"/><circle cx="1194" cy="478" r="12.5" fill="#161616"/><circle cx="1194" cy="478" r="9.2" fill="#3c3c3c" stroke="#dad6ca" stroke-width="3.400"/><path d="M1188.5 479a5.500 5.500 0 1 1 5.500 5.500" fill="none" stroke="#cfcbc0" stroke-width="2.600" stroke-linecap="round" transform="rotate(200 1194 478)"/><circle cx="1194" cy="478" r="2.200" fill="#8c8c8c"/><path d="M1206 336q8-4 13 0 M1222 352q6-1 6 5 M1222 462q6 1 6-5 M1206 480q8 4 13 0" stroke="#4a4a4a" stroke-width="2.600" fill="none"/><path d="M1214 382l8 12-8 12z M1214 408l8 12-8 12z" fill="#c8c8c8" stroke="#333" stroke-width=".8"/><path d="M1226 396q6 4 0 10 6 4 0 10" stroke="#d0ccc4" stroke-width="2.200" fill="none"/><circle cx="1225" cy="407" r="1.600" fill="#e8c070"/><path d="M1173 338l10 5-10 5z M1173 466l10 5-10 5z" fill="#d0d0d0"/><rect x="1165" y="352" width="47.500" height="109.500" fill="#17808c" stroke="#cfd4d4" stroke-width="1.400"/><ellipse cx="1172" cy="401" rx="35" ry="41" fill="url(#med)"/><path d="M1178 390q6-6 8 0t-6 4q6 2 3 8t-10 3" stroke="#ffb010" stroke-width="3" fill="none" stroke-linecap="round"/><rect x="1181" y="381" width="4" height="4" fill="#ffb010" transform="rotate(45 1183 383)"/></svg><div style="left:1000px;top:262px;width:34px;height:34px;background:radial-gradient(ellipse at 100% 60%,rgba(70,70,70,.55),rgba(0,0,0,0) 70%)"></div><svg style="left:887px;top:560px" width="80" height="80" viewBox="1170 655 80 80"><path d="M1170 660l16 12.500-16 12.500z" fill="#14a882"/><path d="M1170 686l19 16.500-19 17z" fill="#dcdc00"/><path d="M1170 712l11 8-11 11z" fill="#12a07c"/><path d="M1170 703l19-.500-10 9z" fill="#b8b800" opacity=".6"/></svg><div class="t" style="left:892.5px;top:643.5px;width:70px;height:18px;line-height:18px;font-size:15px;font-weight:bold;color:#f2a114;direction:ltr;text-align:left;transform:scaleX(.8);transform-origin:0 50%">FTWARE</div><div class="t" id="br1" style="left:797px;top:664px;width:174px;height:17px;line-height:17px;font-size:13px;font-weight:bold;color:#6d5f14;text-align:right;transform:scaleX(.78);transform-origin:100% 50%">محصولات نرم افزاری با نام تجاری نورکس</div><div class="t" id="br2" style="left:797px;top:683px;width:174px;height:19px;line-height:19px;font-size:12.700px;font-weight:bold;color:#6d5f14;text-align:right">شرکت مهندسی صهبا رایانه توس</div></div>
<div style="left:1320px;top:93px;width:280px;height:740px;background:#c9c9c9"></div>
<div style="left:1321px;top:95px;width:277px;height:27px;border:1px solid #8c8c8c;border-radius:4px;box-shadow:inset 0 1px 0 #e6e6e6;background:linear-gradient(#cfcfcf 0,#c2c2c2 45%,#ababab 50%,#b4b4b4 70%,#c4c4c4 100%)"></div>
<div class="t" style="left:1366px;top:98px;width:200px;height:22px;line-height:22px;font-size:11px;color:#111;text-align:center;">فاكتورهاي (فروش) اخير</div>
<div style="left:1322px;top:831px;width:275px;height:2px;background:#c9c9c9;border-radius:0 0 3px 3px"></div>
<div style="left:1321px;top:122px;width:277px;height:709px;border:2px solid #7b7b7b;border-top:1px solid #e4e4e4;border-bottom:1px solid #585858;border-radius:0 0 4px 4px;box-shadow:inset 0 0 0 1px #e0e0e0;background:repeating-linear-gradient(rgba(255,255,255,.045) 0,rgba(255,255,255,.045) 1px,rgba(0,0,0,.025) 1px,rgba(0,0,0,.025) 2px),linear-gradient(#cecece,#919191)"></div>
<div style="left:0px;top:833px;width:1600px;height:27px;z-index:-1;background:linear-gradient(#101010 0,#1c1c1c 1px,#5a5a5a 2px,#9b9b9d 3px,#8c8c8d 13px,#7c7c7c 27px)"></div>
<div style="left:0px;top:832px;width:281px;height:2px;background:#4c4c4c"></div>
<div style="left:148px;top:838px;width:2px;height:18px;background:#d4d4d4;border-right:1px solid #8a8a8a"></div>
<div style="left:319px;top:838px;width:2px;height:18px;background:#d4d4d4;border-right:1px solid #8a8a8a"></div>
<div style="left:470px;top:838px;width:2px;height:18px;background:#d4d4d4;border-right:1px solid #8a8a8a"></div>
<div style="left:681px;top:838px;width:2px;height:18px;background:#d4d4d4;border-right:1px solid #8a8a8a"></div>
<div class="t" style="left:10px;top:836px;width:128px;height:22px;line-height:22px;font-size:10.2px;color:#2a1a1a;text-align:center;">ساعت ورود: ۱۰:۱۷:۱۶ ق.ظ</div>
<div class="t" style="left:170px;top:836px;width:130px;height:22px;line-height:22px;font-size:11.2px;color:#2a1a1a;text-align:center;">امروز: پنج شنبه ۴ آذر ۱۴۰۰</div>
<div class="t" style="left:336px;top:836px;width:120px;height:22px;line-height:22px;font-size:11.3px;color:#2a1a1a;text-align:center;">تاريخ ميلادي: ۲۵/۱۱/۲۰۲۱</div>
<div class="t" style="left:1376px;top:836px;width:200px;height:22px;line-height:22px;font-size:11.6px;color:#2a1a1a;text-align:right;">كاربر:&nbsp; مديريت&nbsp; خوش آمديد</div>
<svg style="left:1583px;top:843px" width="14" height="14" viewBox="0 0 14 14"><g fill="#e6e6e6"><rect x="10" y="2" width="2" height="2"/><rect x="7" y="5" width="2" height="2"/><rect x="10" y="5" width="2" height="2"/><rect x="4" y="8" width="2" height="2"/><rect x="7" y="8" width="2" height="2"/><rect x="10" y="8" width="2" height="2"/><rect x="1" y="11" width="2" height="2"/><rect x="4" y="11" width="2" height="2"/><rect x="7" y="11" width="2" height="2"/><rect x="10" y="11" width="2" height="2"/></g></svg>
<div style="left:0px;top:860px;width:1600px;height:40px;background:#27353d"></div>
<div style="left:0px;top:860px;width:200px;height:40px;background:#25373f"></div>
<svg style="left:0;top:860px" width="200" height="40" viewBox="0 0 200 40"><g fill="#fff"><path d="M16 14.2l6.6-.9v6.3H16z M23.4 13.2L32 12v7.6h-8.600000000000001z M16 20.4h6.6v6.3L16 25.800000000000001z M23.4 20.4H32V28l-8.600000000000001-1.2z"/></g><g fill="none" stroke="#fff" stroke-width="1.6"><circle cx="75.500" cy="17.5" r="5.2"/><path d="M71.800 21.300L64.500 28.500"/></g><circle cx="120" cy="20" r="6.7" fill="none" stroke="#fff" stroke-width="2"/><g fill="none" stroke="#fff" stroke-width="1.3"><rect x="161.600" y="16.200" width="9.200" height="7.600"/><path d="M160.500 13.200h11.500 M160.500 26.800h11.500 M160.500 13.200v2 M172 13.200v2 M160.500 26.800v-2 M172 26.800v-2 M175 12.500v3 M175 17.500v10"/></g></svg>
<div style="left:424px;top:131px;width:750px;height:636px;background:#8f9291;border-radius:7px 7px 2px 2px;box-shadow:inset 1px 0 0 #c9c9c9,inset -1px 0 0 #6c6c6c,inset 0 -1px 0 #5c5c5c"></div>
<div style="left:424px;top:131px;width:750px;height:26px;border-radius:7px 7px 0 0;border-top:1px solid #c6c6c6;border-bottom:0;background:linear-gradient(#acacac 0,#9e9e9e 20%,#8a8a8a 44%,#535353 48%,#5d5d5d 65%,#7b7b7b 100%)"></div>
<div class="t" style="left:430px;top:133px;width:60px;height:22px;line-height:22px;font-size:12px;color:#fff;text-align:left;font-weight:bold;text-shadow:0 1px 0 #4a5a8a;">چک چاپ</div>
<div style="left:1134px;top:135px;width:18px;height:18px;border-radius:9px;border:1px solid #5b5b5b;box-shadow:inset 0 0 0 1px #a2a2a2;background:linear-gradient(#9b9b9b,#7e7e7e 50%,#8e8e8e)"></div>
<div style="left:1153px;top:135px;width:18px;height:18px;border-radius:9px;border:1px solid #5b5b5b;box-shadow:inset 0 0 0 1px #a2a2a2;background:linear-gradient(#9b9b9b,#7e7e7e 50%,#8e8e8e)"></div>
<svg style="left:1134px;top:135px" width="38" height="18" viewBox="0 0 38 18"><path d="M5 11.500h7" stroke="#b9b9b9" stroke-width="2.200" fill="none"/><path d="M24.500 5.500l7 7 M31.500 5.500l-7 7" stroke="#6c6c6c" stroke-width="2.600" fill="none"/></svg>
<div style="left:427px;top:157px;width:745px;height:49px;border:1px solid #4c4c4c;border-top-color:#222;border-radius:4px;box-shadow:inset 0 1px 0 #cfcfcf;background:linear-gradient(#bababa 0,#adadad 20%,#9f9f9f 45%,#777 47%,#868686 65%,#ababab 100%)"></div>
<svg style="left:890px;top:165px" width="280" height="26" viewBox="890 165 280 26"><g><path d="M898 171.500l6-1v14.500l-6-1.500z" fill="#8a86c8" stroke="#6c68b0" stroke-width=".6"/><rect x="899" y="173" width="2.500" height="2" fill="#d8d8f8"/><path d="M904 171h3v13.500h-3z" fill="#d8f0f8"/><path d="M904.500 178l4.500-4.500v2.700h3.500v3.600H909v2.700z" fill="#20c020" stroke="#0a8a0a" stroke-width=".7"/></g><g><rect x="938" y="170" width="16" height="13.500" fill="#e4e4f4" stroke="#c8c8e0" stroke-width=".6"/><rect x="938" y="170" width="16" height="3.500" fill="#4a68d0"/><path d="M941 177h3v3h3v3h-3v3h-3v-3h-3v-3h3z" fill="#38c838" stroke="#e8ffe8" stroke-width=".6"/></g><g><path d="M984.500 171l9.500 1.500v12l-9.500-1.500z" fill="#f4f4fc" stroke="#1c50b8" stroke-width="1.400"/><path d="M987.500 175l1 1 M989 178l1 1 M991 177.500l-2 3" stroke="#f0a030" stroke-width="1"/><path d="M978.500 176l6.500 3.500" stroke="#6a9ae0" stroke-width="1.600"/><path d="M978.200 175.800l1.300.7" stroke="#e04020" stroke-width="1.600"/><path d="M983.500 170.500h1 M983.500 184h1 M993.500 185h1" stroke="#fff" stroke-width="1"/></g><g><path d="M1026 171h6l1 5h-8z" fill="#fafafa" stroke="#d0d0d0" stroke-width=".5"/><path d="M1021.500 177c0-1.500 1-2.500 3-2.500h7.500c2 0 3 1 3 2.500v4h-13.500z" fill="#3f88e8"/><path d="M1025 176.500h6.500v3H1025z" fill="#ffb000"/><path d="M1026 176.500h4v1.200h-4z" fill="#111"/><path d="M1021.500 181h13.500v2.500l-2 1.500h-10z" fill="#0a0a14"/><path d="M1024 182.500l6-.5 1.500 2-6.500 1z" fill="#d8e8d0"/></g><g><path d="M1066.500 170.500h5v1.200h-5z" fill="#e4e6f2"/><rect x="1062.500" y="172" width="13.500" height="2.300" fill="#e2e4f0" stroke="#c4c8dc" stroke-width=".5"/><path d="M1063.500 174.500h11.500v11h-11.500z" fill="#dadcec" stroke="#c4c8dc" stroke-width=".5"/><path d="M1066.300 176v8.500 M1069.300 176v8.500 M1072.300 176v8.500" stroke="#a4acc8" stroke-width="1.400"/></g><g><rect x="1103" y="171" width="14" height="14" fill="#eeeefc"/><rect x="1103" y="170.800" width="14" height="1.600" fill="#2c9cf4"/><rect x="1103" y="184" width="14" height="1.300" fill="#2c9cf4"/><rect x="1110" y="173" width="6.500" height="9" fill="#fff"/><path d="M1106 173l6.500 7.500" stroke="#38c838" stroke-width="2.800" stroke-linecap="round"/><path d="M1105 171.800l1.500 1.700" stroke="#e83020" stroke-width="2.800" stroke-linecap="round"/><path d="M1112.500 180.500l1 2" stroke="#806040" stroke-width="1.200"/></g><g><path d="M1144.500 170h14.500v15.500h-15.500v-14z" fill="#a4a4f4" stroke="#7a7adc" stroke-width="1"/><rect x="1148.500" y="170.500" width="7.500" height="4.500" fill="#dcdcf4"/><rect x="1150" y="171" width="1.800" height="3.200" fill="#5a6ac0"/><rect x="1146.500" y="177.500" width="10.500" height="7.500" fill="#fcfcfc"/><path d="M1147 179.500h9.500 M1147 181.500h9.500 M1147 183.500h9.500" stroke="#b8b8c8" stroke-width=".8"/></g></svg>
<div style="left:428px;top:206px;width:743px;height:374px;background:#b4b8b7;border-top:1px solid #d7d9d8"></div>
<div class="fld dis" style="left:812px;top:223px;width:271px;height:28px;"></div>
<svg style="left:813.3px;top:233.2px" width="11" height="7" viewBox="0 0 11 7"><path d="M1 1l4.500 4.500L10 1" fill="none" stroke="#3c3c3c" stroke-width="1.2"/></svg>
<div class="t" style="left:811px;top:222px;width:272px;height:30px;line-height:30px;font-size:15px;color:#000;text-align:right;font-weight:bold;">رفاه</div>
<div class="t" style="left:1087px;top:222px;width:120px;height:30px;line-height:30px;font-size:11px;color:#111;text-align:left;direction:rtl;text-align:left;">طرح چاپ</div>
<div class="fld az" style="left:811px;top:254px;width:273px;height:30px;"></div>
<div class="t" style="left:1087px;top:254px;width:120px;height:30px;line-height:30px;font-size:11px;color:#111;text-align:left;direction:rtl;text-align:left;">شماره سريال</div>
<div class="fld" style="left:963px;top:286px;width:121px;height:30px;"></div>
<div class="t" style="left:1087px;top:286px;width:120px;height:30px;line-height:30px;font-size:11px;color:#111;text-align:left;direction:rtl;text-align:left;">تاريخ سر رسيد</div>
<div class="t" style="left:1010px;top:286px;width:60px;height:30px;line-height:30px;font-size:19px;color:#000;text-align:center;font-weight:bold;direction:ltr;font-style:italic;">/&nbsp; &nbsp;/</div>
<div style="left:940px;top:297px;width:13px;height:13px;border:1px solid #6f6f6f;border-radius:2px;background:linear-gradient(135deg,#c9c9c9,#fff 70%)"></div>
<div class="t" style="left:880px;top:287px;width:56px;height:30px;line-height:30px;font-size:11px;color:#111;text-align:right;">يادآوري</div>
<div class="fld" style="left:963px;top:318px;width:121px;height:30px;"></div>
<div class="t" style="left:1087px;top:318px;width:120px;height:30px;line-height:30px;font-size:11px;color:#111;text-align:left;direction:rtl;text-align:left;">تاريخ صدور</div>
<div class="t" style="left:1010px;top:318px;width:60px;height:30px;line-height:30px;font-size:19px;color:#000;text-align:center;font-weight:bold;direction:ltr;font-style:italic;">/&nbsp; &nbsp;/</div>
<div class="fld az" style="left:811px;top:350px;width:273px;height:30px;"></div>
<div class="t" style="left:1087px;top:350px;width:120px;height:30px;line-height:30px;font-size:11px;color:#111;text-align:left;direction:rtl;text-align:left;">تاريخ به حروف</div>
<div class="fld" style="left:811px;top:381px;width:273px;height:30px;"></div>
<div class="t" style="left:1087px;top:381px;width:120px;height:30px;line-height:30px;font-size:11px;color:#111;text-align:left;direction:rtl;text-align:left;">مبلغ</div>
<div class="t" style="left:811px;top:381px;width:267px;height:30px;line-height:30px;font-size:12px;color:#000;text-align:right;font-weight:bold;">۰</div>
<div class="fld az" style="left:811px;top:412px;width:273px;height:30px;"></div>
<div class="t" style="left:1087px;top:412px;width:120px;height:30px;line-height:30px;font-size:11px;color:#111;text-align:left;direction:rtl;text-align:left;">مبلغ به حروف</div>
<div class="fld" style="left:811px;top:444px;width:273px;height:30px;"></div>
<svg style="left:813.3px;top:455.2px" width="11" height="7" viewBox="0 0 11 7"><path d="M1 1l4.500 4.500L10 1" fill="none" stroke="#3c3c3c" stroke-width="1.2"/></svg>
<div class="t" style="left:1087px;top:444px;width:120px;height:30px;line-height:30px;font-size:11px;color:#111;text-align:left;direction:rtl;text-align:left;">در وجه</div>
<div class="fld dis" style="left:1005px;top:477px;width:78px;height:28px;"></div>
<svg style="left:1006.3px;top:487.2px" width="11" height="7" viewBox="0 0 11 7"><path d="M1 1l4.500 4.500L10 1" fill="none" stroke="#3c3c3c" stroke-width="1.2"/></svg>
<div class="t" style="left:1004px;top:476px;width:79px;height:30px;line-height:30px;font-size:15px;color:#000;text-align:right;font-weight:bold;">دريافتي</div>
<div class="t" style="left:1087px;top:477px;width:120px;height:30px;line-height:30px;font-size:11px;color:#111;text-align:left;direction:rtl;text-align:left;">دريافتى/ پرداختى</div>
<div class="t" style="left:920px;top:477px;width:76px;height:30px;line-height:30px;font-size:11px;color:#111;text-align:right;">پرداخت كننده</div>
<div class="fld" style="left:811px;top:476px;width:121px;height:30px;"></div>
<svg style="left:813.3px;top:487.2px" width="11" height="7" viewBox="0 0 11 7"><path d="M1 1l4.500 4.500L10 1" fill="none" stroke="#3c3c3c" stroke-width="1.2"/></svg>
<div class="fld" style="left:811px;top:508px;width:273px;height:30px;"></div>
<svg style="left:813.3px;top:519.2px" width="11" height="7" viewBox="0 0 11 7"><path d="M1 1l4.500 4.500L10 1" fill="none" stroke="#3c3c3c" stroke-width="1.2"/></svg>
<div class="t" style="left:1087px;top:508px;width:120px;height:30px;line-height:30px;font-size:11px;color:#111;text-align:left;direction:rtl;text-align:left;">بانك</div>
<div class="fld" style="left:811px;top:540px;width:273px;height:30px;"></div>
<svg style="left:813.3px;top:551.2px" width="11" height="7" viewBox="0 0 11 7"><path d="M1 1l4.500 4.500L10 1" fill="none" stroke="#3c3c3c" stroke-width="1.2"/></svg>
<div class="t" style="left:1087px;top:540px;width:120px;height:30px;line-height:30px;font-size:11px;color:#111;text-align:left;direction:rtl;text-align:left;">شعبه</div>
<div class="fld" style="left:443px;top:222px;width:273px;height:30px;"></div>
<svg style="left:445.3px;top:233.2px" width="11" height="7" viewBox="0 0 11 7"><path d="M1 1l4.500 4.500L10 1" fill="none" stroke="#3c3c3c" stroke-width="1.2"/></svg>
<div class="t" style="left:719px;top:222px;width:120px;height:30px;line-height:30px;font-size:11px;color:#111;text-align:left;direction:rtl;text-align:left;">شماره حساب</div>
<div class="fld" style="left:443px;top:254px;width:273px;height:30px;"></div>
<svg style="left:445.3px;top:265.2px" width="11" height="7" viewBox="0 0 11 7"><path d="M1 1l4.500 4.500L10 1" fill="none" stroke="#3c3c3c" stroke-width="1.2"/></svg>
<div class="t" style="left:719px;top:254px;width:120px;height:30px;line-height:30px;font-size:11px;color:#111;text-align:left;direction:rtl;text-align:left;">نام صاحب حساب</div>
<div class="fld dis" style="left:444px;top:287px;width:271px;height:28px;"></div>
<svg style="left:445.3px;top:297.2px" width="11" height="7" viewBox="0 0 11 7"><path d="M1 1l4.500 4.500L10 1" fill="none" stroke="#3c3c3c" stroke-width="1.2"/></svg>
<div class="t" style="left:719px;top:286px;width:120px;height:30px;line-height:30px;font-size:11px;color:#111;text-align:left;direction:rtl;text-align:left;">نوع چك</div>
<div class="t" style="left:443px;top:286px;width:271px;height:30px;line-height:30px;font-size:15px;color:#000;text-align:right;font-weight:bold;">عادي</div>
<div style="left:443px;top:318px;width:273px;height:30px;border:1px solid #0078d7;background:#e5f1fb"></div>
<svg style="left:445.3px;top:329.2px" width="11" height="7" viewBox="0 0 11 7"><path d="M1 1l4.500 4.500L10 1" fill="none" stroke="#3c3c3c" stroke-width="1.2"/></svg>
<div class="t" style="left:719px;top:318px;width:120px;height:30px;line-height:30px;font-size:11px;color:#111;text-align:left;direction:rtl;text-align:left;">وضعيت چك</div>
<div class="t" style="left:443px;top:318px;width:272px;height:30px;line-height:30px;font-size:16px;color:#000;text-align:right;font-weight:bold;">نزد صندوق</div>
<div style="left:444px;top:351px;width:271px;height:219px;background:#fff"></div>
<div class="t" style="left:719px;top:430px;width:120px;height:30px;line-height:30px;font-size:11px;color:#111;text-align:left;direction:rtl;text-align:left;">توضيحات</div>
<div style="left:428px;top:580px;width:743px;height:10px;background:repeating-linear-gradient(#9c9c9c 0,#9c9c9c 1px,#adadad 1px,#adadad 2px);border-top:1px solid #dedede;border-bottom:1px solid #565656"></div>
<div style="left:428px;top:590px;width:743px;height:9px;background:repeating-linear-gradient(#9c9c9c 0,#9c9c9c 1px,#adadad 1px,#adadad 2px);border-top:1px solid #cbcbcb"></div>
<div class="t" style="left:1131px;top:583px;width:32px;height:14px;line-height:14px;font-size:10px;color:#222;text-align:center;background:#a6a8a7;">نتيجه</div>
<div style="left:1163px;top:586px;width:6px;height:1px;background:#8a8a8a"></div>
<div style="left:428px;top:598px;width:743px;height:166px;background:#fff;border:2px solid #7b9cc4;border-top:1px solid #7b9cc4"></div>
<div class="hd" style="left:435px;top:600px;width:733px;height:21px;border-bottom:1px solid #8a8a8a;border-left:1px solid #666"></div>
<div style="left:435px;top:621px;width:733px;height:22px;background:#b4c7e7;border-bottom:1px solid #a3b4cf"></div>
<div class="t" style="left:435px;top:600px;width:71px;height:20px;line-height:20px;font-size:11px;color:#111;text-align:center;">وضعيت چك</div>
<div class="t" style="left:506px;top:600px;width:77px;height:20px;line-height:20px;font-size:11px;color:#111;text-align:center;">نوع چك</div>
<div style="left:506px;top:600px;width:1px;height:21px;background:#fff;border-left:1px solid #e2e2e2;width:2px"></div>
<div style="left:506px;top:621px;width:1px;height:22px;background:#a8b6cc"></div>
<div class="t" style="left:583px;top:600px;width:83px;height:20px;line-height:20px;font-size:11px;color:#111;text-align:center;">شعبه</div>
<div style="left:583px;top:600px;width:1px;height:21px;background:#fff;border-left:1px solid #e2e2e2;width:2px"></div>
<div style="left:583px;top:621px;width:1px;height:22px;background:#a8b6cc"></div>
<div class="t" style="left:666px;top:600px;width:66px;height:20px;line-height:20px;font-size:11px;color:#111;text-align:center;">بانك</div>
<div style="left:666px;top:600px;width:1px;height:21px;background:#fff;border-left:1px solid #e2e2e2;width:2px"></div>
<div style="left:666px;top:621px;width:1px;height:22px;background:#a8b6cc"></div>
<div class="t" style="left:732px;top:600px;width:92px;height:20px;line-height:20px;font-size:11px;color:#111;text-align:center;">دريافتى/پرداختى</div>
<div style="left:732px;top:600px;width:1px;height:21px;background:#fff;border-left:1px solid #e2e2e2;width:2px"></div>
<div style="left:732px;top:621px;width:1px;height:22px;background:#a8b6cc"></div>
<div class="t" style="left:824px;top:600px;width:81px;height:20px;line-height:20px;font-size:11px;color:#111;text-align:center;">مبلغ</div>
<div style="left:824px;top:600px;width:1px;height:21px;background:#fff;border-left:1px solid #e2e2e2;width:2px"></div>
<div style="left:824px;top:621px;width:1px;height:22px;background:#a8b6cc"></div>
<div class="t" style="left:905px;top:600px;width:82px;height:20px;line-height:20px;font-size:11px;color:#111;text-align:center;">تاريخ صدور</div>
<div style="left:905px;top:600px;width:1px;height:21px;background:#fff;border-left:1px solid #e2e2e2;width:2px"></div>
<div style="left:905px;top:621px;width:1px;height:22px;background:#a8b6cc"></div>
<div class="t" style="left:987px;top:600px;width:81px;height:20px;line-height:20px;font-size:11px;color:#111;text-align:center;">تاريخ سر رسيد</div>
<div style="left:987px;top:600px;width:1px;height:21px;background:#fff;border-left:1px solid #e2e2e2;width:2px"></div>
<div style="left:987px;top:621px;width:1px;height:22px;background:#a8b6cc"></div>
<div class="t" style="left:1068px;top:600px;width:100px;height:20px;line-height:20px;font-size:11px;color:#111;text-align:center;">شماره سريال</div>
<div style="left:1068px;top:600px;width:1px;height:21px;background:#fff;border-left:1px solid #e2e2e2;width:2px"></div>
<div style="left:1068px;top:621px;width:1px;height:22px;background:#a8b6cc"></div>
</body></html>
